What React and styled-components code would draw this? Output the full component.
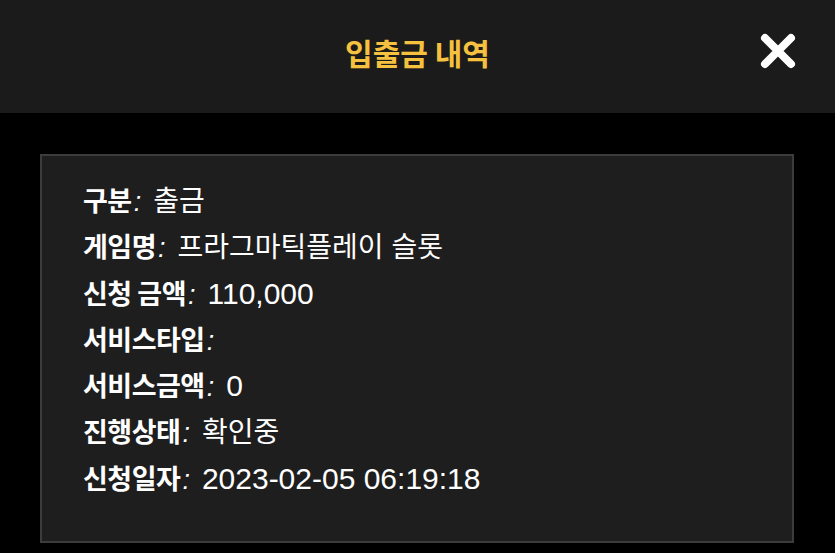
import React from "react";
import styled, { createGlobalStyle } from "styled-components";

const GlobalStyle = createGlobalStyle`
  html, body {
    margin: 0;
    padding: 0;
    background: #000;
  }
  body {
    font-family: "Liberation Sans", "Noto Sans CJK KR", sans-serif;
  }
`;

// [라벨, 값, 숫자값 여부]
const rows = [
  ["구분", "출금", false],
  ["게임명", "프라그마틱플레이 슬롯", false],
  ["신청 금액", "110,000", true],
  ["서비스타입", "", false],
  ["서비스금액", "0", true],
  ["진행상태", "확인중", false],
  ["신청일자", "2023-02-05 06:19:18", true],
];

const App = () => {
  return (
    <>
      <GlobalStyle />
      <Page>
        <Header>
          <Title>입출금 내역</Title>
          <CloseButton aria-label="닫기">
            <svg width="36" height="36" viewBox="0 0 36 36">
              <path
                d="M5 5 L31 31 M31 5 L5 31"
                stroke="#fff"
                strokeWidth="8"
                strokeLinecap="round"
              />
            </svg>
          </CloseButton>
        </Header>
        <Body>
          <InfoBox>
            {rows.map((r, i) => (
              <Row key={`row${i}`}>
                <Label>{r[0]}</Label>
                <Colon>:</Colon>
                {r[1] && <Value $numeric={r[2]}>{r[1]}</Value>}
              </Row>
            ))}
          </InfoBox>
        </Body>
      </Page>
    </>
  );
};

export default App;

const Page = styled.div`
  width: 835px;
  height: 553px;
  background: #000;
  display: flex;
  flex-direction: column;
`;
const Header = styled.div`
  height: 113px;
  background: #1b1b1b;
  display: flex;
  align-items: center;
  justify-content: center;
  position: relative;
`;
const Title = styled.div`
  color: #f5c13e;
  font-family: "Noto Sans CJK KR", sans-serif;
  font-size: 30px;
  font-weight: bold;
  margin-top: -10px;
`;
const CloseButton = styled.button`
  position: absolute;
  right: 39px;
  top: 33px;
  width: 36px;
  height: 36px;
  padding: 0;
  border: none;
  background: none;
  display: flex;
  cursor: pointer;
`;
const Body = styled.div`
  flex: 1;
  padding: 41px 41px 10px 40px;
  display: flex;
`;
const InfoBox = styled.div`
  flex: 1;
  background: #1e1e1e;
  border: 2px solid #3c3c3c;
  padding: 21px 0 0 41px;
  display: flex;
  flex-direction: column;
`;
const Row = styled.div`
  display: flex;
  align-items: baseline;
  height: 46.3px;
  line-height: 46px;
  color: #fff;
  font-size: 27px;
`;
const Label = styled.span`
  font-family: "Noto Sans CJK KR", sans-serif;
  font-weight: bold;
  letter-spacing: -0.5px;
`;
const Colon = styled.span`
  font-style: italic;
  margin: 0 12px 0 2px;
`;
const Value = styled.span`
  font-family: "Liberation Sans", "Noto Sans CJK KR", sans-serif;
  font-size: ${(p) => (p.$numeric ? "30px" : "28px")};
`;
